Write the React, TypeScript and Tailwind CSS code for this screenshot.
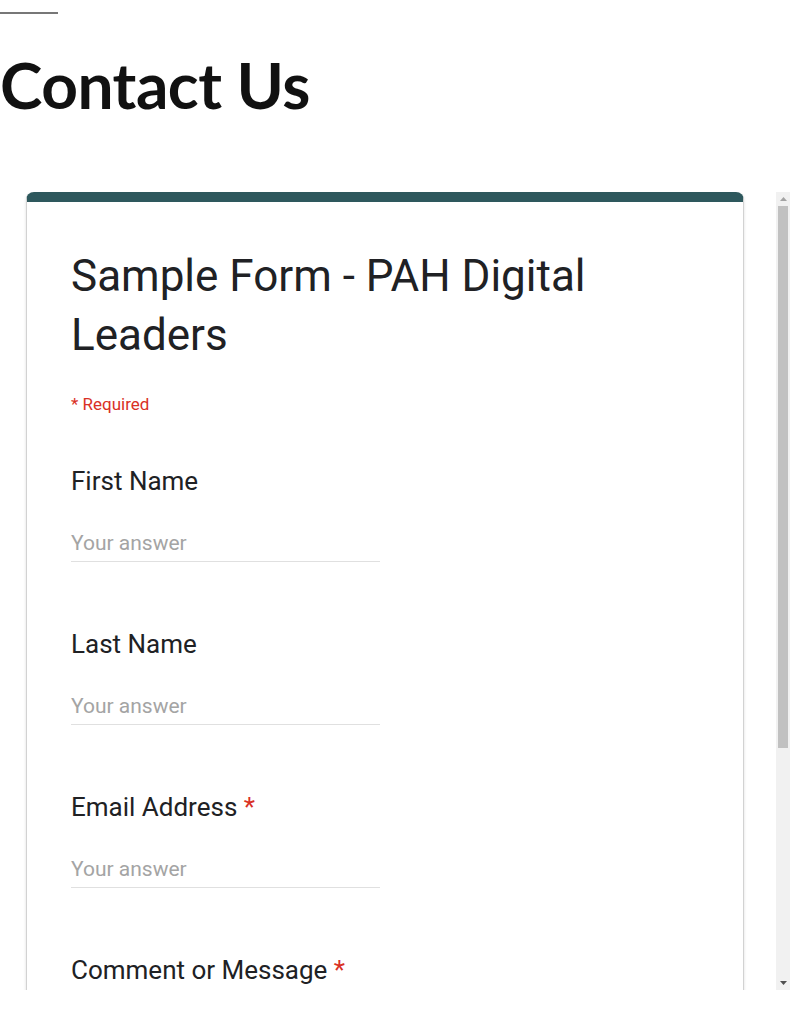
import React from "react";

const Field = ({ label, required }: { label: string; required?: boolean }) => (
  <div>
    <div className="text-[26px] leading-[34px] text-[#202124]">
      {label}
      {required && <span className="text-[#d93025]"> *</span>}
    </div>
    <div className="mt-[31px] w-[309px] border-b border-[#e0e0e0] pb-[4px] text-[21px] leading-[28px] text-[#a4a4a4]">
      Your answer
    </div>
  </div>
);

export default function App() {
  return (
    <div className="h-[1024px] w-full overflow-hidden bg-white" style={{ fontFamily: "Roboto, 'Noto Sans', sans-serif" }}>
      <div className="pt-[12px]">
        <div className="h-[2px] w-[58px] bg-[#777777]" />
      </div>
      <h1
        className="mt-[31px] text-[64px] leading-[80px] font-bold tracking-[-0.5px] text-[#111111]"
        style={{ fontFamily: "Lato, 'Open Sans', sans-serif" }}
      >
        Contact Us
      </h1>
      <div className="mt-[67px] flex h-[798px] w-[790px]">
        <div className="flex-1 overflow-hidden pl-[26px] pr-[32px]">
          <div className="h-[820px] rounded-t-[8px] border-x border-t-[10px] border-x-[#d2d2d2] border-t-[#2e585d] bg-white pl-[44px] pt-[45px] shadow-[0_1px_3px_rgba(0,0,0,0.14)]">
            <div className="text-[44px] leading-[59px] text-[#202124]">
              Sample Form - PAH Digital
              <br />
              Leaders
            </div>
            <div className="mt-[27px] text-[17px] leading-[24px] text-[#d93025]">* Required</div>
            <div className="mt-[48px] flex flex-col gap-[65px]">
              <Field label="First Name" />
              <Field label="Last Name" />
              <Field label="Email Address" required />
              <div className="text-[26px] leading-[34px] text-[#202124]">
                Comment or Message<span className="text-[#d93025]"> *</span>
              </div>
            </div>
          </div>
        </div>
        <div className="flex w-[14px] flex-col bg-[#f1f1f1]">
          <div className="flex h-[14px] items-center justify-center">
            <svg width="7" height="4" viewBox="0 0 7 4">
              <polygon points="3.5,0 7,4 0,4" fill="#a3a3a3" />
            </svg>
          </div>
          <div className="mx-[2px] h-[542px] bg-[#c1c1c1]" />
          <div className="flex-1" />
          <div className="flex h-[14px] items-center justify-center">
            <svg width="7" height="4" viewBox="0 0 7 4">
              <polygon points="0,0 7,0 3.5,4" fill="#505050" />
            </svg>
          </div>
        </div>
      </div>
    </div>
  );
}
